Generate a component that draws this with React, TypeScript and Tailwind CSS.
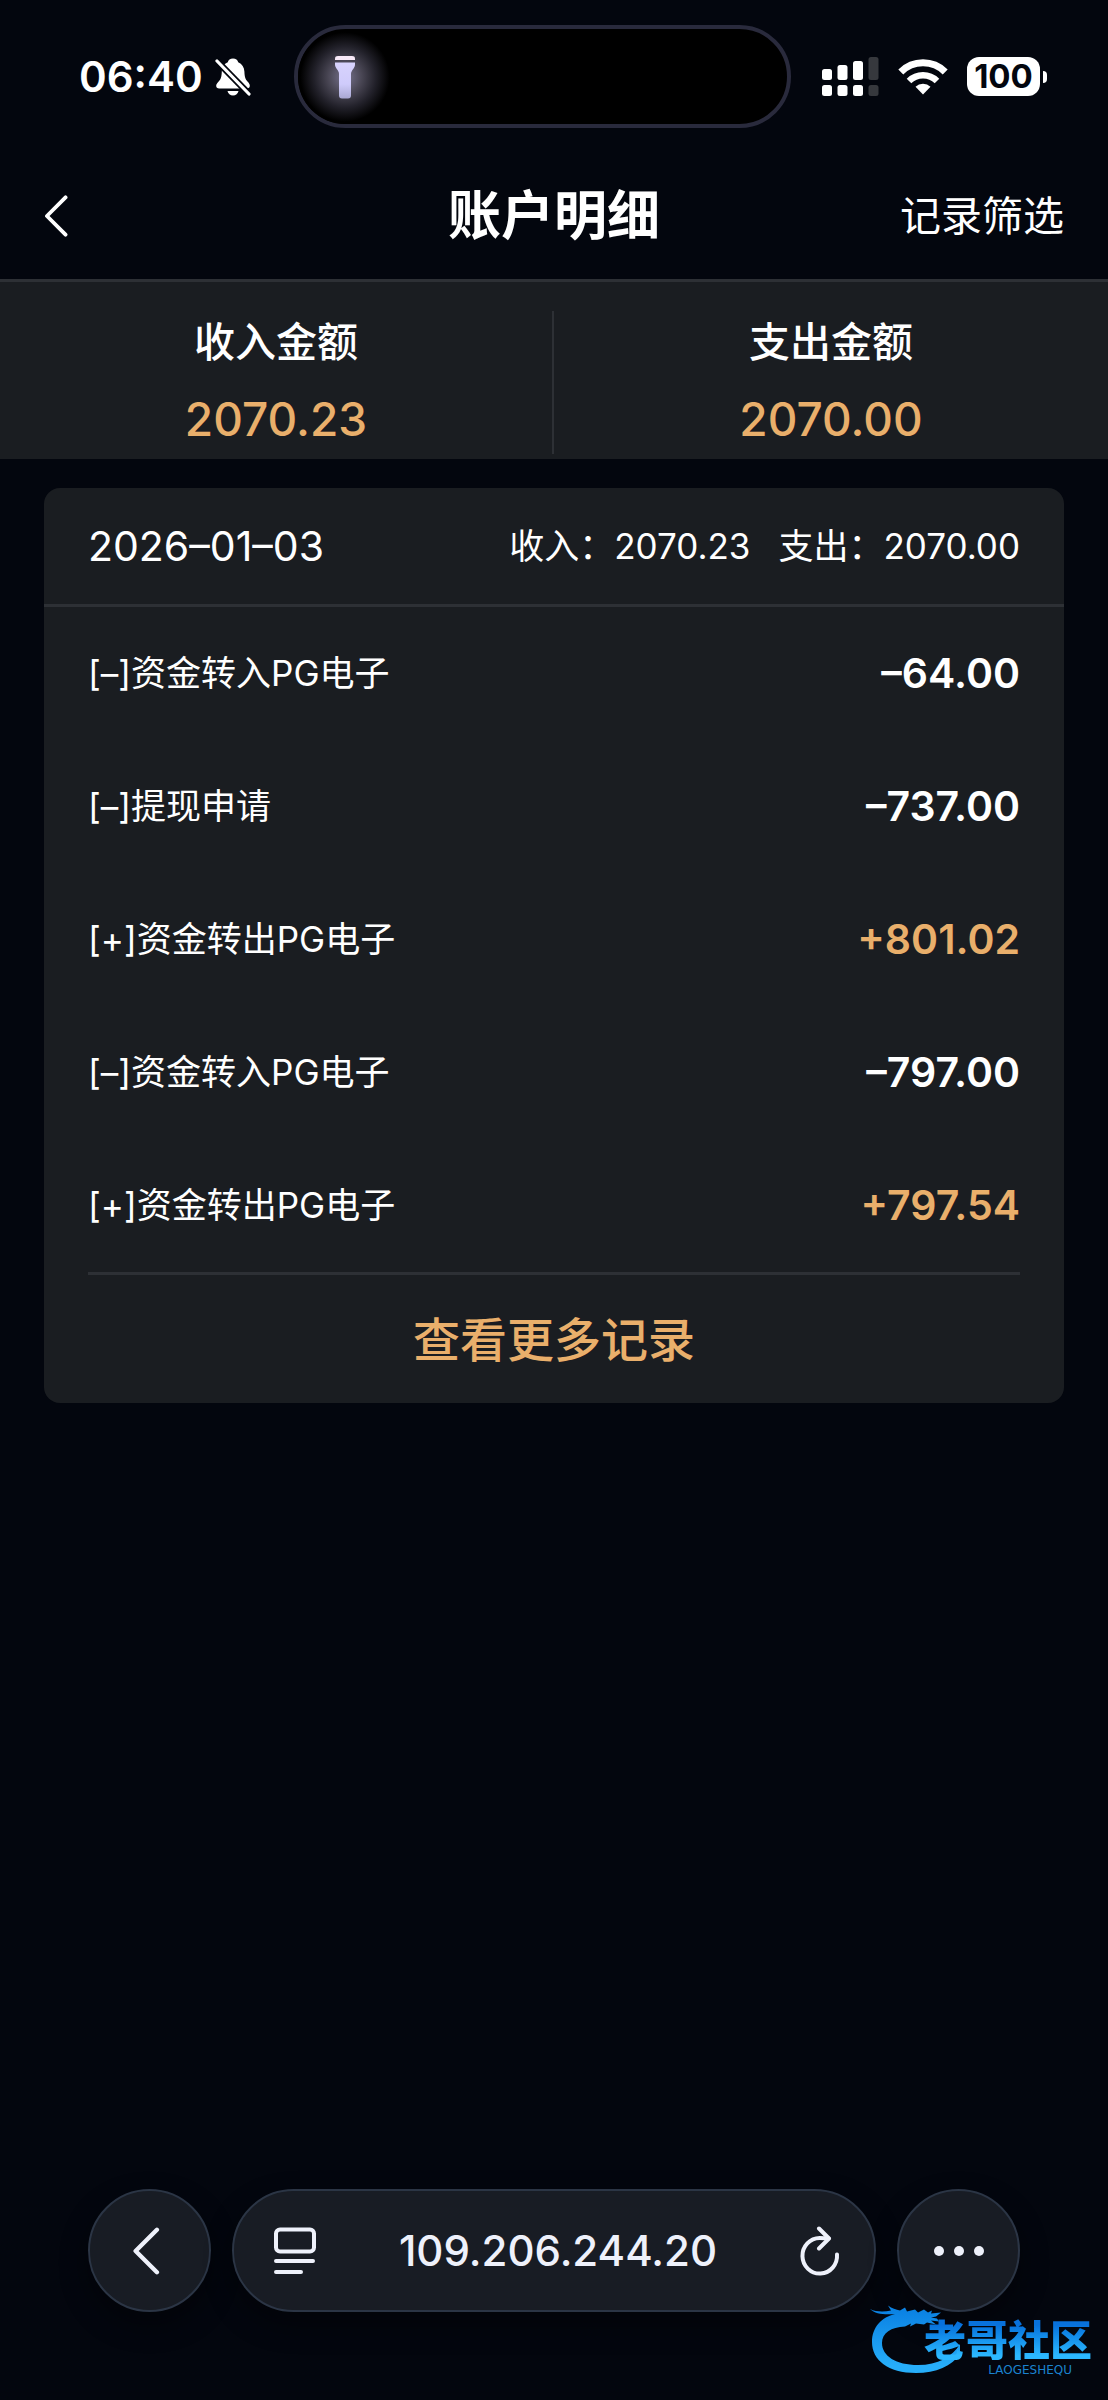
import React from 'react';

const sans = "font-['Inter','Noto_Sans_CJK_SC',sans-serif]";

const summary = [
  { label: '收入金额', value: '2070.23' },
  { label: '支出金额', value: '2070.00' },
];

const records = [
  { id: 1, name: '[–]资金转入PG电子', amount: '–64.00', income: false },
  { id: 2, name: '[–]提现申请', amount: '–737.00', income: false },
  { id: 3, name: '[+]资金转出PG电子', amount: '+801.02', income: true },
  { id: 4, name: '[–]资金转入PG电子', amount: '–797.00', income: false },
  { id: 5, name: '[+]资金转出PG电子', amount: '+797.54', income: true },
];

function BellOff() {
  return (
    <svg width="36" height="40" viewBox="0 0 36 40" fill="none" aria-hidden="true">
      <path
        d="M18 1.500c-2.800 0-4.800 1.600-5.200 3.700C8.900 6.800 7 10.200 6.800 14.500c-.2 5.500-.9 7.800-3.600 10.600C2 26.400 1.200 27.600 1.200 28.800c0 1.700 1.100 2.700 3 2.700h27.600c1.900 0 3-1 3-2.700 0-1.200-.6-2.400-1.800-3.700-2.700-2.800-3.400-5.100-3.600-10.600-.2-4.300-2.300-7.700-6.200-9.300-.4-2.100-2.400-3.700-5.200-3.700Z"
        fill="#fff"
      />
      <path d="M12.500 34h11c-.5 2.700-2.700 4.600-5.500 4.600S13 36.700 12.500 34Z" fill="#fff" />
      <path d="M0 2 35 38" stroke="#03060e" strokeWidth="6.500" />
      <path d="M2 4 34 37" stroke="#fff" strokeWidth="3.200" strokeLinecap="round" />
    </svg>
  );
}

function Flashlight() {
  return (
    <svg width="22" height="44" viewBox="0 0 22 44" aria-hidden="true">
      <defs>
        <linearGradient id="torch" x1="0" y1="0" x2="0" y2="1">
          <stop offset="0" stopColor="#d8d3fd" />
          <stop offset="0.600" stopColor="#cfcbfb" />
          <stop offset="1" stopColor="#a9a8d2" />
        </linearGradient>
      </defs>
      <path d="M1 5V3.500C1 1.800 2.200 1 4 1h14c1.800 0 3 .8 3 2.500V5Z" fill="#f8e9f8" />
      <path d="M1 7.500h20v2c0 4-4 5.500-4 9.500v21.500c0 2-1 3-3 3H8c-2 0-3-1-3-3V19c0-4-4-5.500-4-9.500Z" fill="url(#torch)" />
    </svg>
  );
}

function Signal() {
  const tops = [12, 8, 4, 0];
  return (
    <svg width="57" height="40" viewBox="0 0 57 40" aria-hidden="true">
      {tops.map((top, i) => (
        <g key={top} fill={i === 3 ? '#36383d' : '#fff'}>
          <rect x={i * 15.5} y={top} width="10" height={23 - top} rx="2.500" />
          <rect x={i * 15.5} y="28" width="10" height="11" rx="2.500" />
        </g>
      ))}
    </svg>
  );
}

function Wifi() {
  return (
    <svg width="50" height="37" viewBox="0 0 50 37" fill="none" stroke="#fff" aria-hidden="true">
      <path d="M2.800 14a31.500 31.500 0 0 1 44.400 0" strokeWidth="7" />
      <path d="M11 23a20 20 0 0 1 28 0" strokeWidth="6.500" />
      <path d="M25 36.500 17.500 28.800a10.800 10.800 0 0 1 15 0Z" fill="#fff" stroke="none" />
    </svg>
  );
}

function Chevron({ w, h }: { w: number; h: number }) {
  return (
    <svg width={w} height={h} viewBox="0 0 24 44" fill="none" aria-hidden="true">
      <path d="M22 2.500 2.500 22 22 41.500" stroke="currentColor" strokeWidth="4" strokeLinecap="round" strokeLinejoin="round" />
    </svg>
  );
}

function Reader() {
  return (
    <svg width="42" height="48" viewBox="0 0 42 48" fill="none" stroke="#eef1fb" strokeWidth="4" strokeLinecap="round" aria-hidden="true">
      <rect x="2" y="2.500" width="38" height="22" rx="4" />
      <path d="M2 34h37M2 45h25" />
    </svg>
  );
}

function Reload() {
  return (
    <svg width="40" height="50" viewBox="0 0 40 50" fill="none" stroke="#eef1fb" strokeWidth="4" strokeLinecap="round" strokeLinejoin="round" aria-hidden="true">
      <path d="M37 28.500A17.300 17.800 0 1 1 19.700 12q5 0 9 .4" />
      <path d="M19 2.500 29 12.500 19 22.500" />
    </svg>
  );
}

function Watermark() {
  return (
    <div className="absolute right-4 bottom-6 h-18 w-56">
      <svg className="absolute top-0 left-0" width="96" height="72" viewBox="0 0 96 72" aria-hidden="true">
        <defs>
          <linearGradient id="dragon" x1="0" y1="0" x2="0" y2="1">
            <stop offset="0.100" stopColor="#0b83e4" />
            <stop offset="0.900" stopColor="#27aefa" />
          </linearGradient>
        </defs>
        <path
          fill="url(#dragon)"
          d="M2 5c6 3 14 3 21 1.500L20 1.500c4 3 8 4 12 5l5-3 2 4 8-2 3 3 6-3 4 3 4-2-1 3 10-1-5 4-5 1 6 1 2 3-8-1 5 4-9-2-3 2-8-1-6 3 1-3-6 3C23 23 14 29 14 39c0 13 14 22 36 22 20 0 34-8 42-21v10C84 62 68 69 48 69 20 69 4 56 4 38 4 23 14 13 27 10 17 11 7 10 2 5Z"
        />
      </svg>
      <div className="absolute top-3 right-0 flex flex-col items-end">
        <span className="bg-linear-to-b from-[#0871dc] from-20% to-[#2cb8ff] to-90% bg-clip-text font-['Noto_Sans_CJK_SC',sans-serif] text-[42px] leading-11 font-black text-transparent">
          老哥社区
        </span>
        <span className="pt-1 pr-5 font-['DejaVu_Sans',sans-serif] text-xs leading-3 text-[#1b83cf]">LAOGESHEQU</span>
      </div>
    </div>
  );
}

const glass = 'border-2 border-[#2b3545] bg-[#181c24] text-[#eef1fb] shadow-[0_12px_28px_rgba(0,0,0,0.4)]';

export default function App() {
  return (
    <div lang="zh-CN" className={`relative flex min-h-screen flex-col bg-[#03060e] text-white ${sans}`}>
      <div className="grid h-[153px] grid-cols-[294fr_497fr_317fr] pt-[25px]">
        <div className="flex h-[103px] items-center gap-3 pl-[79px]">
          <span className="text-[42px] leading-none font-semibold">06:40</span>
          <BellOff />
        </div>
        <div className="flex h-[103px] items-center rounded-full border-4 border-[#292a3c] bg-black">
          <div className="flex size-[94px] items-center justify-center rounded-full bg-[radial-gradient(closest-side,#77738e_0%,#4a4755_35%,#22212a_65%,#000_95%)]">
            <Flashlight />
          </div>
        </div>
        <div className="flex h-[103px] items-center gap-[19px] pl-[31px]">
          <Signal />
          <Wifi />
          <div className="flex items-center gap-[3px]">
            <span className="flex h-[39px] w-[73px] items-center justify-center rounded-xl bg-white text-[33px] leading-none font-bold text-[#03060e]">
              100
            </span>
            <span className="h-3 w-1 rounded-r-full bg-white" />
          </div>
        </div>
      </div>

      <header className="grid h-[129px] grid-cols-3 items-center border-b-[3px] border-[#2d3035] px-11">
        <button type="button" aria-label="返回" className="justify-self-start">
          <Chevron w={24} h={42} />
        </button>
        <h1 className="text-center text-[53px] leading-none font-bold">账户明细</h1>
        <button type="button" className="justify-self-end text-[41px] leading-none">
          记录筛选
        </button>
      </header>

      <section className="grid grid-cols-2 bg-[#1a1d21] pt-[29px] pb-[5px]">
        {summary.map((s, i) => (
          <div key={s.label} className={`flex h-[143px] flex-col items-center ${i === 0 ? 'border-r-2 border-[#2d3035]' : ''}`}>
            <span className="text-[41px] leading-[62px] font-medium">{s.label}</span>
            <span className="pt-4 text-[46px] leading-[60px] font-medium text-[#e9af6b]">{s.value}</span>
          </div>
        ))}
      </section>

      <section className="mx-11 mt-[29px] rounded-2xl bg-[#1a1d21]">
        <div className="flex h-[119px] items-center justify-between border-b-[3px] border-[#2d3035] px-11">
          <h2 className="text-[41px] leading-none">2026–01–03</h2>
          <p className="flex gap-7 text-[35px] leading-none">
            <span>收入：2070.23</span>
            <span>支出：2070.00</span>
          </p>
        </div>
        <ul className="px-11">
          {records.map((r) => (
            <li key={r.id} className="flex h-[133px] items-center justify-between">
              <span className="text-[35px] leading-none">{r.name}</span>
              <span className={`text-[41px] leading-none font-semibold ${r.income ? 'text-[#e9af6b]' : ''}`}>{r.amount}</span>
            </li>
          ))}
        </ul>
        <div className="mx-11 border-t-[3px] border-[#2d3035]">
          <button type="button" className="h-32 w-full text-[47px] leading-none font-medium text-[#e9af6b]">
            查看更多记录
          </button>
        </div>
      </section>

      <nav className="mt-auto flex items-center gap-[21px] px-[88px] pb-[88px]">
        <button type="button" aria-label="后退" className={`flex size-[123px] items-center justify-center rounded-full pr-2 ${glass}`}>
          <Chevron w={28} h={48} />
        </button>
        <div className={`flex h-[123px] flex-1 items-center justify-between rounded-full pr-[34px] pl-10 ${glass}`}>
          <button type="button" aria-label="阅读器">
            <Reader />
          </button>
          <span className="text-[42px] leading-none font-medium">109.206.244.20</span>
          <button type="button" aria-label="刷新">
            <Reload />
          </button>
        </div>
        <button type="button" aria-label="更多" className={`flex size-[123px] items-center justify-center gap-[10px] rounded-full ${glass}`}>
          <span className="size-[10px] rounded-full bg-[#eef1fb]" />
          <span className="size-[10px] rounded-full bg-[#eef1fb]" />
          <span className="size-[10px] rounded-full bg-[#eef1fb]" />
        </button>
      </nav>
      <Watermark />
    </div>
  );
}
